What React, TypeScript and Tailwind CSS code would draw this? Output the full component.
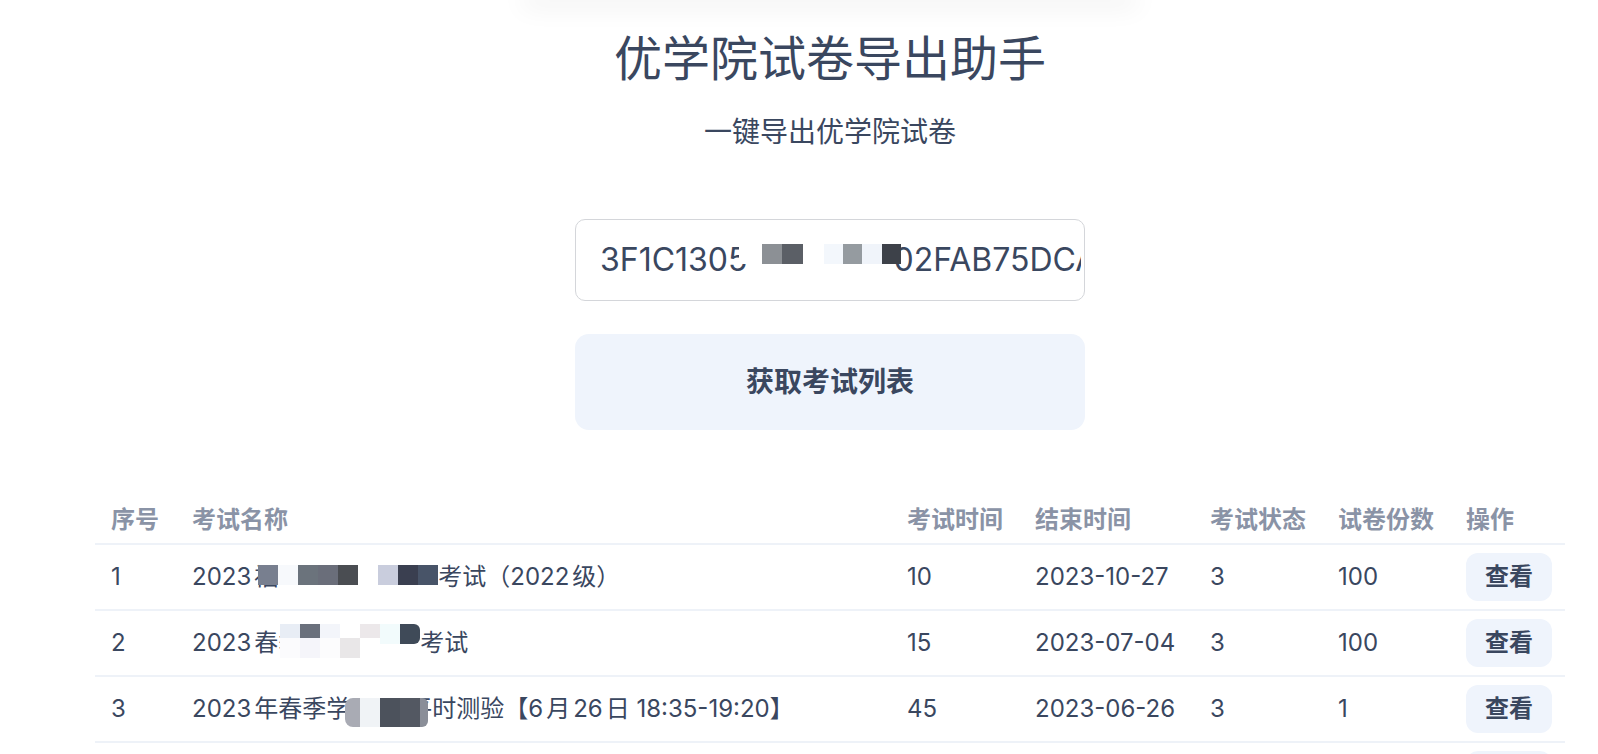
import React from "react";

type Block = { w: string; c: string };

// pixelated patches that hide part of the text in the screenshot
function Mosaic({ blocks, className }: { blocks: Block[]; className?: string }) {
    return (
        <span className={"inline-flex " + (className ?? "relative")}>
            {blocks.map((b, j) => (
                <span key={j} className={"block " + b.w + " " + b.c} />
            ))}
        </span>
    );
}

const tokenBlocks: Block[] = [
    { w: "w-[23px] h-[20px]", c: "bg-white" },
    { w: "w-[20px] h-[20px]", c: "bg-[#8c9095]" },
    { w: "w-[21px] h-[20px]", c: "bg-[#5b5f66]" },
    { w: "w-[21px] h-[20px]", c: "bg-white" },
    { w: "w-[19px] h-[20px]", c: "bg-[#f3f7fc]" },
    { w: "w-[19px] h-[20px]", c: "bg-[#959ba0]" },
    { w: "w-[20px] h-[20px]", c: "bg-[#f0f4fa]" },
    { w: "w-[19px] h-[20px]", c: "bg-[#3d4149]" },
];

const row1Blocks: Block[] = [
    { w: "w-[20px] h-[20px]", c: "bg-[#787f8f]" },
    { w: "w-[20px] h-[20px]", c: "bg-[#f7f9fc]" },
    { w: "w-[20px] h-[20px]", c: "bg-[#6b737c]" },
    { w: "w-[20px] h-[20px]", c: "bg-[#6a6e7a]" },
    { w: "w-[20px] h-[20px]", c: "bg-[#4a4d52]" },
    { w: "w-[20px] h-[20px]", c: "bg-white" },
    { w: "w-[20px] h-[20px]", c: "bg-[#c9cddd]" },
    { w: "w-[20px] h-[20px]", c: "bg-[#3a3f50]" },
    { w: "w-[20px] h-[20px]", c: "bg-[#485468]" },
];

const row2Top: Block[] = [
    { w: "w-[20px] h-[20px]", c: "bg-[#e8edf5]" },
    { w: "w-[20px] h-[20px]", c: "bg-[#6a707c]" },
    { w: "w-[20px] h-[20px]", c: "bg-[#f3f5fa]" },
    { w: "w-[20px] h-[20px]", c: "bg-white" },
    { w: "w-[20px] h-[20px]", c: "bg-[#ece8ea]" },
    { w: "w-[20px] h-[20px]", c: "bg-[#f2fbfc]" },
    { w: "w-[20px] h-[20px]", c: "bg-[#3f4a58] rounded-r-md" },
];

const row2Bottom: Block[] = [
    { w: "w-[20px] h-[20px]", c: "bg-[#fbfbfd]" },
    { w: "w-[20px] h-[20px]", c: "bg-[#f5f5fa]" },
    { w: "w-[20px] h-[20px]", c: "bg-[#fcfcfd]" },
    { w: "w-[20px] h-[20px]", c: "bg-[#e9e7e8]" },
    { w: "w-[20px] h-[20px]", c: "bg-white" },
];

const row3Blocks: Block[] = [
    { w: "w-[15px] h-[29px]", c: "bg-[#a9abb4] rounded-l-lg" },
    { w: "w-[20px] h-[29px]", c: "bg-[#f0f3f6]" },
    { w: "w-[20px] h-[29px]", c: "bg-[#4c525c]" },
    { w: "w-[20px] h-[29px]", c: "bg-[#535862]" },
    { w: "w-[8px] h-[29px]", c: "bg-[#8a8e98] rounded-r-md" },
];

const exams = [
    {
        id: 1,
        name: (
            <>
                2023福
                <Mosaic blocks={row1Blocks} className="relative z-10 ml-[-20px] align-baseline" />
                考试（2022级）
            </>
        ),
        time: "10",
        end: "2023-10-27",
        status: "3",
        count: "100",
    },
    {
        id: 2,
        name: (
            <>
                2023春季
                <span className="relative top-[-7px] z-10 ml-[-22px] inline-block h-[20px] align-baseline">
                    <Mosaic blocks={row2Top} />
                    <Mosaic blocks={row2Bottom} className="absolute left-0 top-[20px]" />
                </span>
                考试
            </>
        ),
        time: "15",
        end: "2023-07-04",
        status: "3",
        count: "100",
    },
    {
        id: 3,
        name: (
            <>
                2023年春季学
                <Mosaic blocks={row3Blocks} className="relative z-10 ml-[-5px] mr-[-20px] align-[-10px]" />
                平时测验【6月26日 18:35-19:20】
            </>
        ),
        time: "45",
        end: "2023-06-26",
        status: "3",
        count: "1",
    },
    {
        id: 4,
        name: <>2023年春季学期期中考试</>,
        time: "60",
        end: "2023-05-12",
        status: "3",
        count: "100",
    },
];

const headers = ["序号", "考试名称", "考试时间", "结束时间", "考试状态", "试卷份数", "操作"];

export default function App() {
    return (
        <div
            className="h-screen overflow-hidden bg-white text-[#3a475f] [text-autospace:normal]"
            style={{ fontFamily: "Inter, 'Noto Sans CJK SC', sans-serif" }}
        >
            <div className="ml-[530px] h-0 w-[600px] shadow-[0_0_26px_8px_rgba(0,0,0,0.06)]" />

            {/* Title */}
            <div className="ml-[575px] w-[510px] pt-[35px] text-center">
                <h1 className="h-[48px] text-[48px] leading-none font-normal">优学院试卷导出助手</h1>
                <p className="mt-[35px] h-[28px] text-[28px] leading-none">一键导出优学院试卷</p>
            </div>

            {/* Token input + fetch button */}
            <div className="ml-[575px] mt-[73px] w-[510px]">
                <div className="flex h-[82px] items-center rounded-[10px] border border-[#d4d6da] pl-[24px] pr-[3px]">
                    <div className="overflow-hidden whitespace-nowrap text-[32px] leading-none">
                        3F1C1305
                        <Mosaic blocks={tokenBlocks} className="relative z-10 ml-[-8px] mr-[-8px] align-[7px]" />
                        02FAB75DCA1E
                    </div>
                </div>
                <button className="mt-[33px] flex h-[96px] w-full items-center justify-center rounded-[14px] bg-[#eff4fc] text-[28px] font-bold">
                    获取考试列表
                </button>
            </div>

            {/* Exam list */}
            <table className="ml-[95px] mt-[66px] w-[1470px] table-fixed border-collapse text-left text-[24px]">
                <colgroup>
                    <col className="w-[81px]" />
                    <col className="w-[715px]" />
                    <col className="w-[128px]" />
                    <col className="w-[175px]" />
                    <col className="w-[128px]" />
                    <col className="w-[128px]" />
                    <col className="w-[115px]" />
                </colgroup>
                <thead>
                    <tr className="border-b-2 border-[#eef2f8]">
                        {headers.map((h) => (
                            <th key={h} className="h-[48px] pl-4 align-middle font-semibold text-[#8a93a6]">
                                {h}
                            </th>
                        ))}
                    </tr>
                </thead>
                <tbody>
                    {exams.map((e) => (
                        <tr key={e.id} className="border-b-2 border-[#eef2f8]">
                            <td className="h-[66px] pl-4">{e.id}</td>
                            <td className="h-[66px] whitespace-nowrap pl-4">{e.name}</td>
                            <td className="h-[66px] pl-4">{e.time}</td>
                            <td className="h-[66px] pl-4">{e.end}</td>
                            <td className="h-[66px] pl-4">{e.status}</td>
                            <td className="h-[66px] pl-4">{e.count}</td>
                            <td className="h-[66px] pl-4">
                                <button className="h-[48px] rounded-[12px] bg-[#eff4fc] px-[19px] text-[24px] font-bold">
                                    查看
                                </button>
                            </td>
                        </tr>
                    ))}
                </tbody>
            </table>
        </div>
    );
}
